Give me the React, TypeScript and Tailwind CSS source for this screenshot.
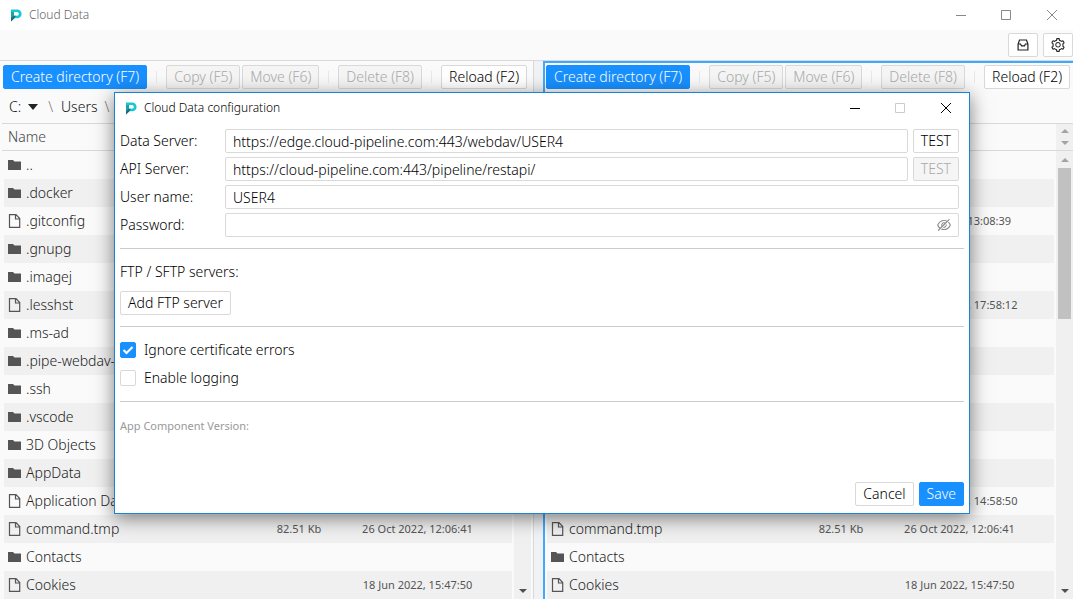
import { AiOutlineEyeInvisible, AiOutlineSetting } from "react-icons/ai"

const ROWS = [
  { name: "..", folder: true },
  { name: ".docker", folder: true },
  { name: ".gitconfig", size: "1 Kb", date: "1 Jun 2022, 13:08:39" },
  { name: ".gnupg", folder: true },
  { name: ".imagej", folder: true },
  { name: ".lesshst", size: "1 Kb", date: "26 Sept 2022, 17:58:12" },
  { name: ".ms-ad", folder: true },
  { name: ".pipe-webdav-client", folder: true },
  { name: ".ssh", folder: true },
  { name: ".vscode", folder: true },
  { name: "3D Objects", folder: true },
  { name: "AppData", folder: true },
  { name: "Application Data", date: "26 Sept 2022, 14:58:50" },
  { name: "command.tmp", size: "82.51 Kb", date: "26 Oct 2022, 12:06:41" },
  { name: "Contacts", folder: true },
  { name: "Cookies", date: "18 Jun 2022, 15:47:50" },
]

function Logo() {
  return (
    <svg viewBox="0 0 11 13" className="h-[13px] w-[11px] shrink-0" aria-hidden="true">
      <path d="M0 0.5h6.2a4.3 4.3 0 0 1 0 8.8H3V6.7h3a1.8 1.8 0 0 0 0-3.6H0z" fill="#17c8d4" />
      <path d="M0 3.1h3v6.2L0 12.5z" fill="#1f9fac" />
      <path d="M0 12.5V9l3-2.3h2L3.2 9.6z" fill="#176f7c" />
    </svg>
  )
}

function WindowControls({ modal }: { modal?: boolean }) {
  const stroke = modal ? "#000" : "#888"
  return (
    <div className="flex gap-[35px]">
      <button aria-label="Minimize">
        <svg width="11" height="11" viewBox="0 0 11 11" stroke={stroke} fill="none">
          <path d="M1 5.5h10" />
        </svg>
      </button>
      <button aria-label="Maximize" disabled={modal}>
        <svg width="11" height="11" viewBox="0 0 11 11" stroke={modal ? "#ccc" : stroke} fill="none">
          <path d="M0.5 0.5h9v9h-9z" />
        </svg>
      </button>
      <button aria-label="Close">
        <svg width="11" height="11" viewBox="0 0 11 11" stroke={stroke} fill="none">
          <path d="M0 0l10 10M10 0l-10 10" />
        </svg>
      </button>
    </div>
  )
}

interface ButtonProps {
  children: React.ReactNode
  primary?: boolean
  disabled?: boolean
}

function Button({ children, primary, disabled }: ButtonProps) {
  const look = primary
    ? "border-[#1890ff] bg-[#1890ff] text-white"
    : disabled
      ? "border-[#d9d9d9] bg-[#f5f5f5] text-[#aaa]"
      : "border-[#d9d9d9] bg-white text-black"
  return (
    <button
      disabled={disabled}
      className={`h-6 shrink-0 rounded-xs border px-[7px] text-sm leading-[22px] whitespace-nowrap ${look}`}
    >
      {children}
    </button>
  )
}

function Separator() {
  return <span className="mx-[9px] h-3 w-px shrink-0 bg-[#e8e8e8]" />
}

function InboxIcon() {
  return (
    <svg width="12" height="12" viewBox="0 0 12 12" fill="none" stroke="#222" strokeWidth="1.2" aria-hidden="true">
      <path d="M2.5 1h7l1.4 4v6H1.1V5zM1.1 5h2.4l1 1.8h3l1-1.8h2.4" />
    </svg>
  )
}

function FolderIcon() {
  return (
    <svg width="14" height="12" viewBox="0 0 14 12" className="shrink-0" aria-hidden="true">
      <path d="M0 1h5l1.5 1.5H13V11H0z" fill="#555" />
    </svg>
  )
}

function FileIcon() {
  return (
    <svg width="14" height="14" viewBox="0 0 14 14" className="shrink-0" fill="none" stroke="#555" aria-hidden="true">
      <path d="M1.5 0.7h6.5l3.7 3.8v8.8H1.5zM7.5 0.7v4.3h4.2" strokeWidth="1.2" />
    </svg>
  )
}

function Arrow({ up, className }: { up?: boolean; className?: string }) {
  return (
    <svg width="8" height="4" viewBox="0 0 8 4" className={className} aria-hidden="true">
      <path d={up ? "M0 4l4-4 4 4z" : "M0 0h8l-4 4z"} fill="currentColor" />
    </svg>
  )
}

function Panel({ active }: { active?: boolean }) {
  return (
    <section
      className={`flex min-w-0 flex-col overflow-hidden bg-[#fafafa] ${
        active ? "border-t-2 border-l-2 border-[#40a9ff]" : "border-r border-[#d9d9d9] pt-[2px] pr-[2px] pl-[2px]"
      }`}
    >
      <div className="flex shrink-0 items-center pt-[2px] pl-px">
        <Button primary>Create directory (F7)</Button>
        <Separator />
        <div className="flex gap-[2px]">
          <Button disabled>Copy (F5)</Button>
          <Button disabled>Move (F6)</Button>
        </div>
        <Separator />
        <Button disabled>Delete (F8)</Button>
        <Separator />
        <Button>Reload (F2)</Button>
      </div>
      <div className="flex h-[34px] shrink-0 items-center pt-[2px] pl-[7px] text-sm text-[#111]">
        <span>C:</span>
        <svg width="10" height="6" viewBox="0 0 10 6" className="ml-[7px]" aria-hidden="true">
          <path d="M0 0h10L5 6z" fill="#222" />
        </svg>
        <span className="ml-[10px] text-[#777]">\</span>
        <a href="#users" className="ml-2">Users</a>
        <span className="ml-[7px] text-[#777]">\</span>
      </div>
      <div className="flex h-7 shrink-0 items-stretch border-y border-[#d9d9d9] text-sm text-[#444]">
        <span className="flex-1 self-center pl-[6px]">Name</span>
        <span className="flex w-[17px] flex-col items-center justify-center gap-2 bg-[#f0f0f0] text-[#a3a3a3]">
          <Arrow up />
          <Arrow />
        </span>
      </div>
      <div className="flex min-h-0 flex-1">
        <div className="min-w-0 flex-1 overflow-hidden px-[2px]">
          <table className="w-full table-fixed text-[#222]">
            <colgroup>
              <col />
              <col className="w-[84px]" />
              <col className="w-[153px]" />
              <col className="w-[18px]" />
            </colgroup>
            <tbody>
              {ROWS.map((row) => (
                <tr key={row.name} className="h-7 even:bg-[#f0f0f0]">
                  <td className="p-0 pl-1">
                    <div className="flex items-center gap-1 text-sm leading-5 whitespace-nowrap">
                      {row.folder ? <FolderIcon /> : <FileIcon />}
                      {row.name}
                    </div>
                  </td>
                  <td className="p-0 text-center text-[11px] leading-5 font-normal whitespace-nowrap text-[#555]">{row.size}</td>
                  <td className="p-0 text-center text-[11px] leading-5 font-normal whitespace-nowrap text-[#555]">{row.date}</td>
                  <td className="p-0" />
                </tr>
              ))}
            </tbody>
          </table>
        </div>
        <div className="flex w-[17px] shrink-0 flex-col items-center bg-[#f0f0f0] pt-[7px] pb-[6px]">
          <Arrow up className="shrink-0 text-[#a3a3a3]" />
          <div className="mt-[6px] h-[151px] w-[13px] shrink-0 bg-[#c1c1c1]" />
          <Arrow className="mt-auto shrink-0 text-[#505050]" />
        </div>
      </div>
    </section>
  )
}

interface FieldProps {
  id: string
  label: string
  value?: string
  type?: string
  children?: React.ReactNode
}

function Field({ id, label, value, type = "text", children }: FieldProps) {
  return (
    <div className="flex h-7 items-center pr-[5px]">
      <label htmlFor={id} className="w-[105px] shrink-0">{label}</label>
      <input
        id={id}
        type={type}
        defaultValue={value}
        className="h-6 min-w-0 flex-1 rounded-xs border border-[#d9d9d9] bg-white px-[7px] text-sm outline-none"
      />
      {children}
    </div>
  )
}

function Checkbox({ label, checked }: { label: string; checked?: boolean }) {
  return (
    <label className="flex h-7 items-center gap-2">
      <span className="relative flex">
        <input
          type="checkbox"
          defaultChecked={checked}
          className="peer size-4 appearance-none rounded-xs border border-[#d9d9d9] bg-white checked:border-[#1890ff] checked:bg-[#1890ff]"
        />
        <svg
          viewBox="0 0 16 16"
          className="pointer-events-none absolute inset-0 hidden size-4 peer-checked:block"
          fill="none"
          stroke="#fff"
          strokeWidth="2"
        >
          <path d="M3.5 8l3 3 6-6" />
        </svg>
      </span>
      {label}
    </label>
  )
}

function ConfigurationWindow() {
  return (
    <div
      role="dialog"
      aria-label="Cloud Data configuration"
      className="absolute top-[92px] right-[103px] left-[114px] flex h-[422px] flex-col border border-[#1883d7] bg-white text-sm text-black shadow-[0_4px_18px_rgba(0,0,0,0.5)]"
    >
      <div className="flex h-[30px] shrink-0 items-center pr-[17px] pl-[11px] text-xs text-black">
        <Logo />
        <h1 className="ml-[7px] flex-1 font-light">Cloud Data configuration</h1>
        <WindowControls modal />
      </div>
      <form className="flex flex-1 flex-col px-[5px] pt-1 pb-[7px]">
        <Field id="data-server" label="Data Server:" value="https://edge.cloud-pipeline.com:443/webdav/USER4">
          <div className="ml-[5px] flex">
            <Button>TEST</Button>
          </div>
        </Field>
        <Field id="api-server" label="API Server:" value="https://cloud-pipeline.com:443/pipeline/restapi/">
          <div className="ml-[5px] flex">
            <Button disabled>TEST</Button>
          </div>
        </Field>
        <Field id="user-name" label="User name:" value="USER4" />
        <div className="relative">
          <Field id="password" label="Password:" type="password" />
          <AiOutlineEyeInvisible className="absolute top-[6px] right-[12px] size-4 text-[#8c8c8c]" />
        </div>
        <hr className="mt-[9px] border-[#ccc]" />
        <p className="mt-[13px] leading-5">FTP / SFTP servers:</p>
        <div className="mt-[9px] flex">
          <Button>Add FTP server</Button>
        </div>
        <hr className="mt-[11px] mb-[9px] border-[#ccc]" />
        <Checkbox label="Ignore certificate errors" checked />
        <Checkbox label="Enable logging" />
        <hr className="mt-[9px] border-[#ccc]" />
        <p className="mt-4 text-[11px] leading-4 font-normal text-[#999]">App Component Version:</p>
        <div className="mt-auto flex justify-end gap-[5px]">
          <Button>Cancel</Button>
          <Button primary>Save</Button>
        </div>
      </form>
    </div>
  )
}

export default function App() {
  return (
    <div className="relative flex h-screen flex-col overflow-hidden bg-[#f0f2f5] font-['Noto_Sans',sans-serif] font-light">
      <header className="flex h-[30px] shrink-0 items-center bg-white pr-[15px] pl-[11px] text-xs text-[#666]">
        <Logo />
        <span className="ml-[7px] flex-1">Cloud Data</span>
        <WindowControls />
      </header>
      <div className="flex h-[31px] shrink-0 items-center justify-end gap-[5px] border-b border-[#d9d9d9] bg-[#fafafa] text-[#262626]">
        <button aria-label="Storage" className="flex h-6 w-[30px] items-center justify-center rounded-xs border border-[#d9d9d9] bg-white">
          <InboxIcon />
        </button>
        <button aria-label="Settings" className="flex h-6 w-[30px] items-center justify-center rounded-xs border border-[#d9d9d9] bg-white">
          <AiOutlineSetting className="size-4" />
        </button>
      </div>
      <main className="grid min-h-0 flex-1 grid-cols-[534fr_530fr] gap-[9px]">
        <Panel />
        <Panel active />
      </main>
      <ConfigurationWindow />
    </div>
  )
}
